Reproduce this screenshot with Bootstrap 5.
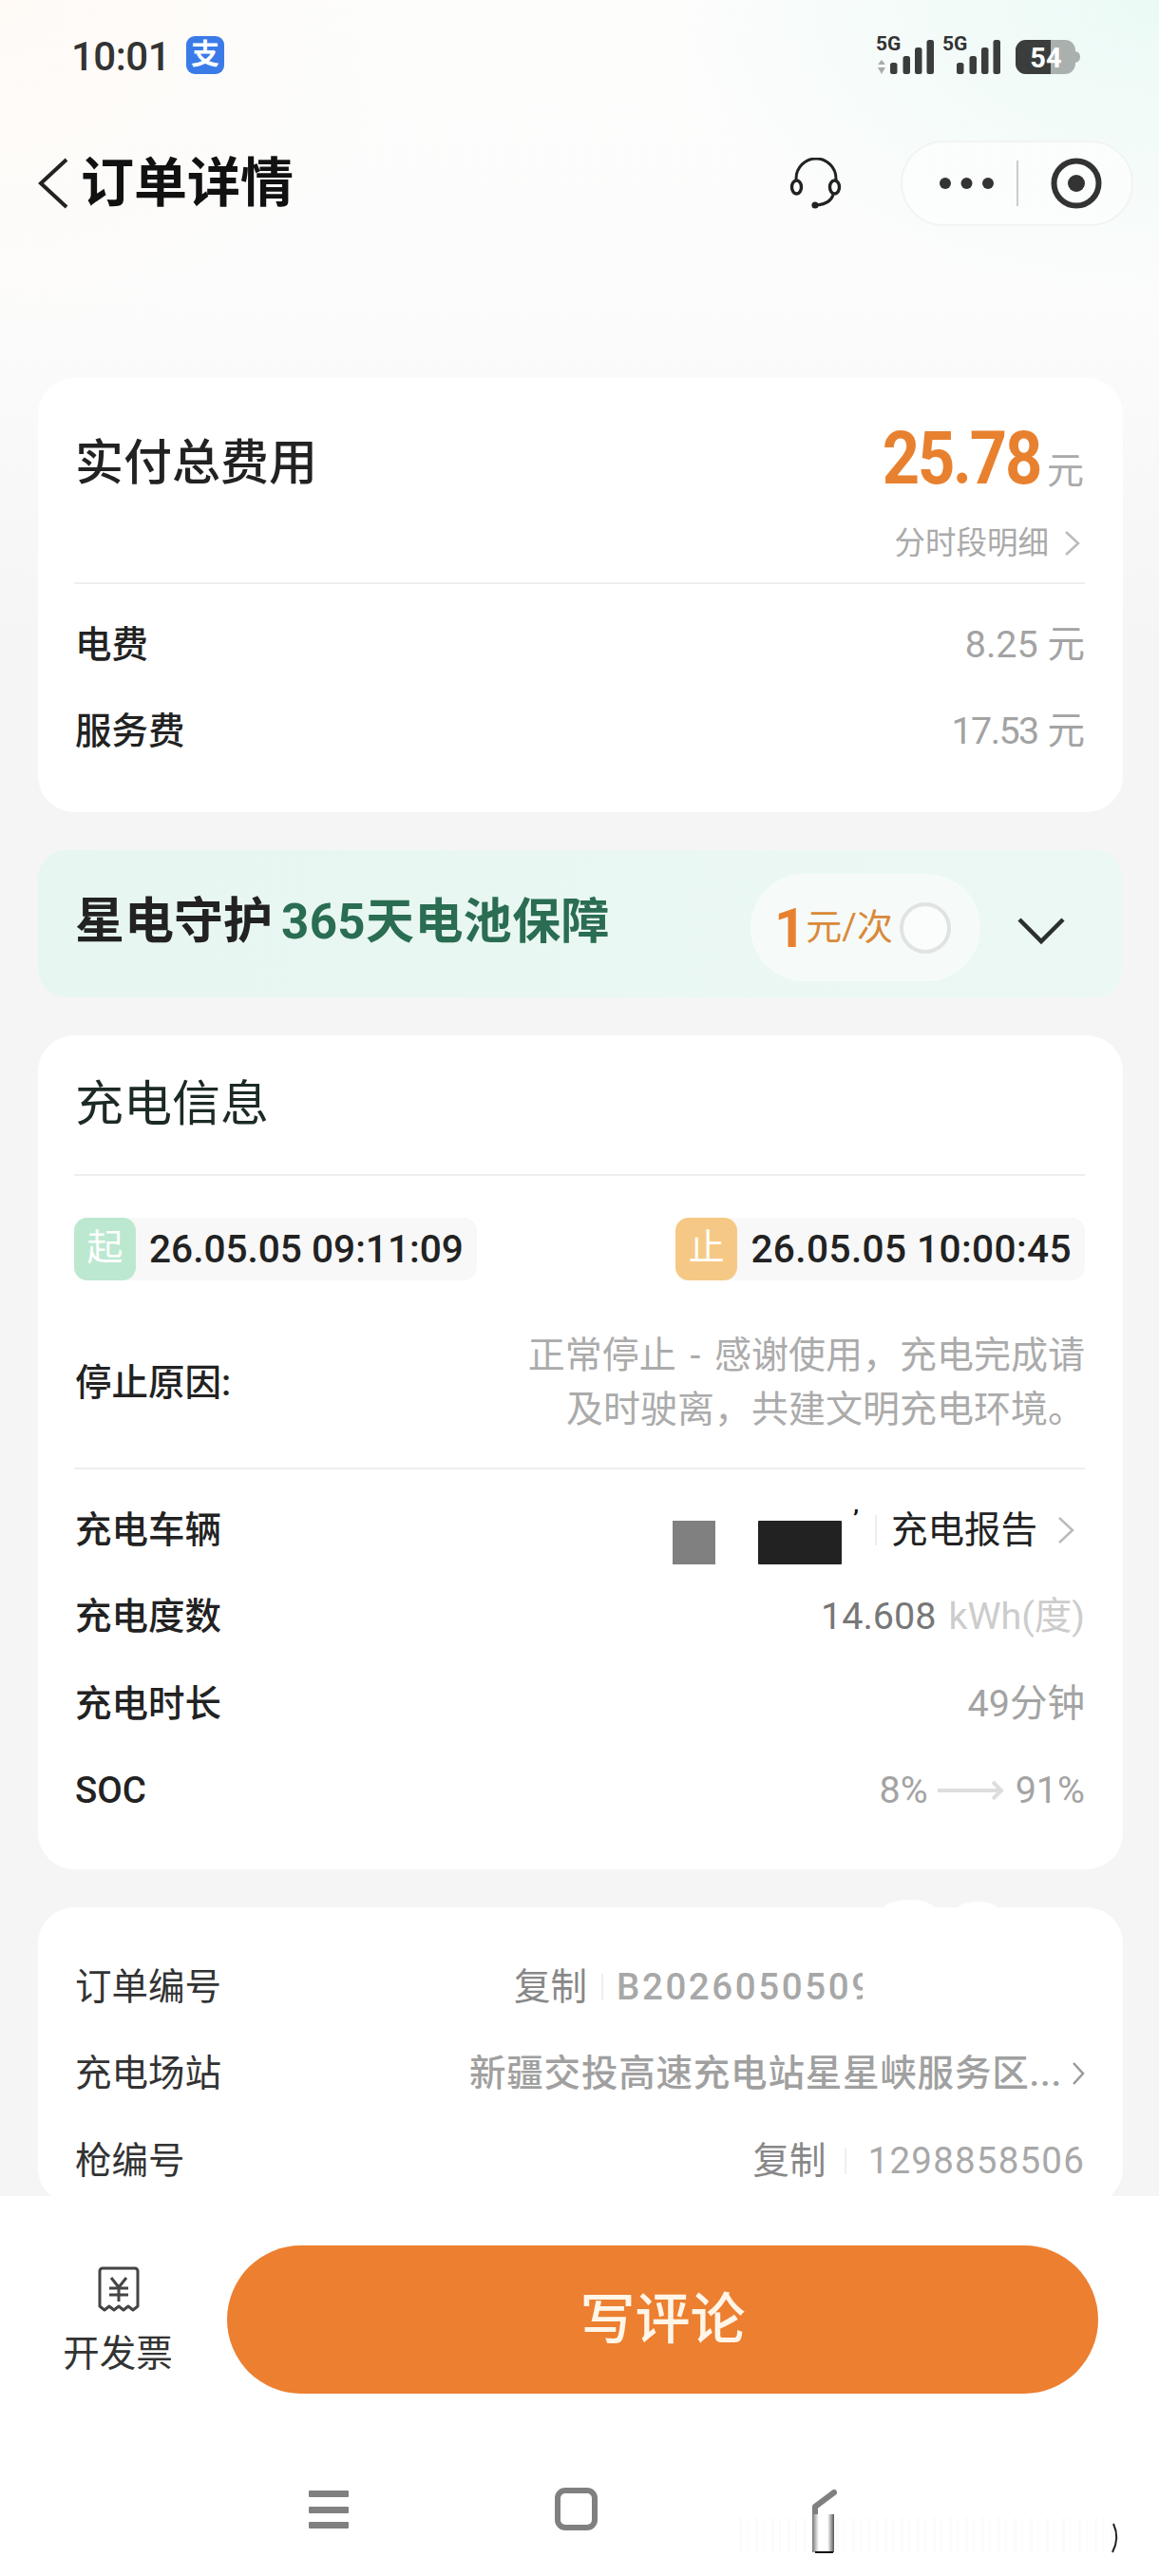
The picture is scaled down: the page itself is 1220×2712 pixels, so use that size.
<!DOCTYPE html>
<html lang="zh">
<head>
  <meta charset="UTF-8">
  <meta name="viewport" content="width=device-width, initial-scale=1.0">
  <title>订单详情</title>
  <link href="https://cdn.jsdelivr.net/npm/bootstrap@5.3.2/dist/css/bootstrap.min.css" rel="stylesheet">
  <style>
    body {
      width: 1220px;
      height: 2712px;
      overflow: hidden;
      font-family: "Roboto", "Noto Sans CJK SC", sans-serif;
      font-size: 38.5px;
      background: #fff;
      color: #222;
    }

    .page-area {
      height: 2312px;
      overflow: hidden;
      background-color: #f5f5f5;
      background-image:
        radial-gradient(ellipse 520px 320px at 100% 0, #ebfaf6 0, rgba(235, 250, 246, 0) 100%),
        radial-gradient(ellipse 420px 380px at 0 0, #fffaf6 0, rgba(255, 250, 246, 0) 100%),
        linear-gradient(180deg, #fdfdfc 0, #fcfcfc 300px, #f5f5f5 680px);
      background-repeat: no-repeat;
    }

    .top-area { height: 398px; }

    .status-row { height: 112px; padding: 38px 82px 0 75px; }
    .clock { font-size: 42px; font-weight: 500; line-height: 44px; color: #333; letter-spacing: -.5px; }
    .ali-icon {
      width: 40px; height: 40px; margin-left: 17px; border-radius: 9px;
      background: #3b7be8; color: #fff; font-size: 30px; font-weight: 700; line-height: 38px; text-align: center;
    }
    .signal-svg { margin-top: -6px; }

    .title-row { height: 90px; margin-top: 36px; padding: 0 27px 0 40px; }
    .page-title { font-size: 56px; font-weight: 700; line-height: 90px; margin: 0 0 0 13px; color: #111; }
    .capsule {
      width: 245px; height: 90px; margin-left: 61px;
      border: 2px solid #f2f4f3; border-radius: 45px; background: rgba(255, 255, 255, .55);
    }

    .sheet { margin: 0 38px 0 40px; border: 0; border-radius: 38px; background: #fff; overflow: visible; }
    .sheet + .sheet { margin-top: 40px; }
    .sheet-in { padding: 0 40px 0 38px; }
    .pad-a { padding-bottom: 39px; }
    .pad-b { padding-bottom: 37px; }
    .sep { height: 2px; background: #eeeeee; }

    .total-block { height: 215px; }
    .total-line { height: 142px; padding-top: 28px; }
    .head-text { font-size: 51px; font-weight: 500; color: #222; line-height: 70px; margin-left: 1px; margin-top: 10px; }
    .money { display: inline-block; font-size: 78px; font-weight: 700; line-height: 84px; color: #e8812f; letter-spacing: -2.5px; transform: scaleX(.88); transform-origin: right center; }
    .unit { font-size: 39px; color: #aaa; margin-left: 7px; margin-right: 1px; }
    .sub-link { font-size: 32.5px; line-height: 46px; color: #aaa; margin-top: 9px; }
    .sub-arrow { margin-left: 16px; }

    .rows { padding-top: 18px; }
    .info-row { height: 91.5px; }
    .row-key { font-weight: 500; color: #222; margin-left: 1px; line-height: 50px; }
    .row-val { color: #a3a3a3; font-size: 39.5px; line-height: 50px; }
    .squeeze { letter-spacing: -1.6px; }

    .guard-box { height: 155px; padding: 25px 60px 0 40px; background: linear-gradient(100deg, #e7f6f1 0, #ecf8f4 100%); border-radius: 30px; }
    .guard-text { font-size: 52px; font-weight: 700; line-height: 72px; margin-top: 15px; margin-left: -1px; }
    .guard-text span { color: #2a6d52; margin-left: 9px; font-size: 51px; letter-spacing: .4px; }
    .price-pill { width: 242px; height: 113px; padding-left: 25px; background: #f6fbf9; color: #d98a3a; font-size: 38px; }
    .price-pill b { font-size: 58px; color: #e8812f; font-weight: 700; line-height: 60px; }
    .ring { width: 54px; height: 54px; margin-left: 7px; border: 4px solid #dfe3e2; border-radius: 50%; background: #fbfdfc; }
    .down-arrow { margin-left: 38px; margin-top: 6px; }

    .charge-head { height: 146px; }
    .charge-title { font-size: 51px; font-weight: 400; color: #1c2a26; line-height: 146px; margin-left: 1px; }
    .time-row { margin-top: 44px; }
    .time-chip { height: 66px; background: #f8f8f8; border-radius: 14px; font-size: 40.6px; font-weight: 500; line-height: 66px; color: #222; padding-right: 14px; }
    .chip-wide { letter-spacing: .4px; }
    .time-tag { width: 65px; height: 66px; margin-right: 14px; border-radius: 14px; color: #fff; font-size: 38px; font-weight: 400; text-align: center; line-height: 62px; }
    .tag-start { background: #bce8d0; }
    .tag-stop { background: #f5c985; }
    .reason-row { margin-top: 51px; margin-bottom: 32px; }
    .reason-text { width: 640px; font-size: 39px; word-spacing: 5px; line-height: 57px; text-align: right; color: #ababab; }

    .blocked { height: 46px; display: inline-block; margin-top: 26px; }
    .blocked-grey { width: 45px; background: #808080; margin-right: 45px; }
    .blocked-dark { width: 88px; background: #222; border-radius: 1px; }
    .tick { font-size: 26px; line-height: 20px; font-weight: 700; margin: -24px 0 0 12px; color: #111; }
    .thin-line { width: 2px; height: 28px; background: #eee; }
    .car-line { margin-left: 17px; height: 32px; }
    .report-link { color: #222; margin-left: 15px; margin-right: 21px; font-size: 38.5px; line-height: 50px; }
    .report-arrow { margin-right: 11px; }

    .energy { color: #777; font-size: 39.5px; }
    .kwh { color: #ccc; margin-left: 13px; }
    .soc-arrow { margin-left: 10px; margin-right: 12px; }

    .bump { position: absolute; background: #fff; border-radius: 50%; }
    .bump-a { width: 54px; height: 20px; top: -8px; left: 890px; }
    .bump-b { width: 42px; height: 16px; top: -6px; left: 968px; }

    .order-rows { padding-top: 38px; }
    .plain-key { font-weight: 400; color: #333; }
    .copy-btn { color: #888; line-height: 50px; }
    .order-line { margin-left: 15px; margin-right: 14px; }
    .gun-line { margin-left: 19px; margin-right: 23px; }
    .order-no { width: 259px; overflow: hidden; white-space: nowrap; color: #a8a8a8; font-weight: 500; letter-spacing: 2.6px; line-height: 50px; margin-right: 234px; }
    .gun-no { color: #a8a8a8; letter-spacing: 1.2px; line-height: 50px; }
    .station { color: #a0a0a0; font-weight: 500; line-height: 50px; letter-spacing: .8px; }
    .station-arrow { margin-left: 10px; }

    .bottom-bar { height: 400px; background: #fff; }
    .action-row { padding: 52px 64px 0 66px; }
    .invoice { width: 116px; margin-right: 57px; color: #333; line-height: 50px; text-align: center; }
    .invoice svg { margin: 22px 0 19px 37px; display: block; }
    .review-btn {
      width: 917px; height: 156px; padding: 0; border: 0; border-radius: 78px;
      background: #ec7f30; color: #fff5e8; font-size: 58px; font-weight: 500; line-height: 150px;
    }
    .review-btn:hover { background: #ec7f30; color: #fff5e8; }

    .nav-row { padding: 99px 0 0 325px; }
    .menu-lines { width: 42px; height: 40px; margin-top: 3px; margin-right: 217px; }
    .menu-lines i { display: block; height: 7px; background: #808080; border-radius: 1px; }
    .home-box { width: 45px; height: 45px; border: 6px solid #808080; border-radius: 11px; margin-right: 146px; }
  </style>
</head>
<body>

  <div class="page-area">
    <div class="top-area">
      <div class="status-row d-flex justify-content-between">
        <div class="d-flex align-items-start">
          <span class="clock">10:01</span>
          <span class="ali-icon">支</span>
        </div>
        <svg class="signal-svg" width="216" height="48" viewBox="0 -6 216 48">
          <text x="0" y="15" font-family="Roboto" font-size="21" font-weight="700" fill="#333">5G</text>
          <polygon points="6,25 2,30 10,30" fill="#aaa"/>
          <polygon points="6,40 2,33 10,33" fill="#aaa"/>
          <rect x="15" y="28" width="7.5" height="12" rx="2.5" fill="#3a3d3c"/>
          <rect x="28.5" y="21" width="7.5" height="19" rx="2.5" fill="#3a3d3c"/>
          <rect x="41" y="12" width="7.5" height="28" rx="2.5" fill="#3a3d3c"/>
          <rect x="53.5" y="4" width="7.5" height="36" rx="2.5" fill="#3a3d3c"/>
          <text x="70" y="15" font-family="Roboto" font-size="21" font-weight="700" fill="#333">5G</text>
          <rect x="85" y="28" width="7.5" height="12" rx="2.5" fill="#3a3d3c"/>
          <rect x="98.5" y="21" width="7.5" height="19" rx="2.5" fill="#3a3d3c"/>
          <rect x="111" y="12" width="7.5" height="28" rx="2.5" fill="#3a3d3c"/>
          <rect x="123.5" y="4" width="7.5" height="36" rx="2.5" fill="#3a3d3c"/>
          <rect x="147" y="4" width="63" height="36" rx="11" fill="#aab0ad"/>
          <path d="M210 16 q5 1 5 6 t-5 6z" fill="#aab0ad"/>
          <path d="M158 4h26v36h-26a11 11 0 0 1-11-11v-14a11 11 0 0 1 11-11z" fill="#3a3d3c"/>
          <text x="179" y="32.5" text-anchor="middle" font-family="Roboto" font-size="29" font-weight="700" fill="#fff">54</text>
        </svg>
      </div>
      <div class="title-row d-flex align-items-center">
        <svg width="32" height="54" viewBox="0 0 32 54" class="flex-shrink-0">
          <polyline points="30,2 3,27 30,52" fill="none" stroke="#222" stroke-width="4"/>
        </svg>
        <h1 class="page-title flex-grow-1">订单详情</h1>
        <svg width="56" height="54" viewBox="0 0 56 54" class="flex-shrink-0">
          <path d="M7 24V22a21 21 0 0 1 42 0v2" fill="none" stroke="#222" stroke-width="3"/>
          <ellipse cx="7.5" cy="31" rx="5" ry="7" fill="none" stroke="#222" stroke-width="3.4"/>
          <ellipse cx="47.5" cy="31" rx="5" ry="7" fill="none" stroke="#222" stroke-width="3.4"/>
          <path d="M46 39c-2 7-8 10-17 11" fill="none" stroke="#222" stroke-width="3"/>
          <circle cx="27" cy="50" r="3.6" fill="#222"/>
        </svg>
        <div class="capsule d-flex align-items-center flex-shrink-0">
          <svg width="241" height="86" viewBox="0 0 241 86">
            <circle cx="45" cy="43" r="6" fill="#333"/>
            <circle cx="67.5" cy="43" r="6" fill="#333"/>
            <circle cx="90" cy="43" r="6" fill="#333"/>
            <line x1="121" y1="19" x2="121" y2="67" stroke="#bbb" stroke-width="1.5"/>
            <circle cx="183" cy="43" r="23.5" fill="none" stroke="#333" stroke-width="6"/>
            <circle cx="183" cy="43" r="9" fill="#333"/>
          </svg>
        </div>
      </div>
    </div>

    <div class="card sheet">
      <div class="sheet-in pad-a">
        <div class="total-block">
          <div class="total-line d-flex justify-content-between align-items-center">
            <span class="head-text">实付总费用</span>
            <span class="d-flex align-items-end">
              <span class="money">25.78</span>
              <span class="unit">元</span>
            </span>
          </div>
          <div class="sub-link d-flex justify-content-end align-items-center">
            分时段明细
            <svg width="18" height="28" viewBox="0 0 18 28" class="sub-arrow me-1"><polyline points="2,2 15,14 2,26" fill="none" stroke="#bbb" stroke-width="2.5"/></svg>
          </div>
        </div>
        <div class="sep"></div>
        <div class="rows">
          <div class="info-row d-flex justify-content-between align-items-center">
            <span class="row-key">电费</span><span class="row-val">8.25 元</span>
          </div>
          <div class="info-row d-flex justify-content-between align-items-center">
            <span class="row-key">服务费</span><span class="row-val"><span class="squeeze">17.53</span> 元</span>
          </div>
        </div>
      </div>
    </div>

    <div class="card sheet guard-box flex-row justify-content-between align-items-start">
      <div class="guard-text">星电守护<span>365天电池保障</span></div>
      <div class="d-flex align-items-center">
        <div class="price-pill rounded-pill d-flex align-items-center">
          <b>1</b>元/次
          <span class="ring"></span>
        </div>
        <svg class="down-arrow" width="52" height="32" viewBox="0 0 52 32"><polyline points="3,4 26,27 49,4" fill="none" stroke="#2b2f2e" stroke-width="4.5"/></svg>
      </div>
    </div>

    <div class="card sheet">
      <div class="sheet-in pad-b">
        <div class="charge-head charge-title">充电信息</div>
        <div class="sep"></div>
        <div class="time-row d-flex justify-content-between">
          <div class="time-chip d-flex"><span class="time-tag tag-start">起</span>26.05.05 09:11:09</div>
          <div class="time-chip chip-wide d-flex"><span class="time-tag tag-stop">止</span>26.05.05 10:00:45</div>
        </div>
        <div class="reason-row d-flex justify-content-between align-items-center">
          <span class="row-key">停止原因:</span>
          <div class="reason-text">正常停止 - 感谢使用，充电完成请<br>及时驶离，共建文明充电环境。</div>
        </div>
        <div class="sep"></div>
        <div class="rows">
          <div class="info-row d-flex justify-content-between align-items-center">
            <span class="row-key">充电车辆</span>
            <span class="d-flex align-items-center">
              <span class="blocked blocked-grey"></span>
              <span class="blocked blocked-dark"></span>
              <span class="tick">’</span>
              <span class="thin-line car-line"></span>
              <span class="report-link">充电报告</span>
              <svg width="18" height="30" viewBox="0 0 18 30" class="report-arrow"><polyline points="2,2 16,15 2,28" fill="none" stroke="#bbb" stroke-width="2.5"/></svg>
            </span>
          </div>
          <div class="info-row d-flex justify-content-between align-items-center">
            <span class="row-key">充电度数</span>
            <span class="row-val"><span class="energy">14.608</span><span class="kwh">kWh(度)</span></span>
          </div>
          <div class="info-row d-flex justify-content-between align-items-center">
            <span class="row-key">充电时长</span><span class="row-val">49分钟</span>
          </div>
          <div class="info-row d-flex justify-content-between align-items-center">
            <span class="row-key">SOC</span>
            <span class="row-val d-flex align-items-center">8%
              <svg width="70" height="24" viewBox="0 0 70 24" class="soc-arrow"><path d="M0 12H66M58 3l9 9-9 9" fill="none" stroke="#ddd" stroke-width="4"/></svg>91%</span>
          </div>
        </div>
      </div>
    </div>

    <div class="card sheet position-relative">
      <span class="bump bump-a"></span>
      <span class="bump bump-b"></span>
      <div class="sheet-in order-rows">
        <div class="info-row d-flex align-items-center">
          <span class="row-key plain-key me-auto">订单编号</span>
          <span class="copy-btn">复制</span>
          <span class="thin-line order-line"></span>
          <span class="order-no">B2026050509</span>
        </div>
        <div class="info-row d-flex justify-content-between align-items-center">
          <span class="row-key plain-key">充电场站</span>
          <span class="d-flex align-items-center">
            <span class="station">新疆交投高速充电站星星峡服务区...</span>
            <svg width="14" height="28" viewBox="0 0 14 28" class="station-arrow"><polyline points="2,3 12,14 2,25" fill="none" stroke="#999" stroke-width="2.5"/></svg>
          </span>
        </div>
        <div class="info-row d-flex align-items-center">
          <span class="row-key plain-key me-auto">枪编号</span>
          <span class="copy-btn">复制</span>
          <span class="thin-line gun-line"></span>
          <span class="gun-no">1298858506</span>
        </div>
      </div>
    </div>
  </div>

  <div class="bottom-bar">
    <div class="action-row d-flex">
      <div class="invoice flex-shrink-0">
        <svg width="44" height="48" viewBox="0 0 44 48">
          <path d="M2 42V5a3 3 0 0 1 3-3h34a3 3 0 0 1 3 3v37l-5 4-5-4-5 4-5-4-5 4-5-4-5 4z" fill="none" stroke="#444" stroke-width="3" stroke-linejoin="round"/>
          <path d="M14 12l8 10 8-10M12 23h20M12 30h20M22 22v15" fill="none" stroke="#444" stroke-width="3"/>
        </svg>
        开发票
      </div>
      <button type="button" class="btn review-btn flex-shrink-0">写评论</button>
    </div>
    <div class="nav-row d-flex align-items-start">
      <div class="menu-lines d-flex flex-column justify-content-between"><i></i><i></i><i></i></div>
      <div class="home-box flex-shrink-0"></div>
      <svg width="420" height="76" viewBox="0 0 420 76" class="flex-shrink-0">
        <defs>
          <linearGradient id="edgeFade" x1="0" x2="1" y1="0" y2="0">
            <stop offset="0" stop-color="#777"/>
            <stop offset=".3" stop-color="#fff"/>
            <stop offset=".7" stop-color="#fff"/>
            <stop offset="1" stop-color="#555"/>
          </linearGradient>
          <pattern id="smudge" width="17" height="40" patternUnits="userSpaceOnUse">
            <rect width="17" height="40" fill="#fff"/>
            <rect x="3" width="3" height="40" fill="#fbfbfb"/>
            <rect x="11" width="2" height="40" fill="#fcfcfc"/>
          </pattern>
        </defs>
        <rect x="0" y="32" width="398" height="37" fill="url(#smudge)"/>
        <polyline points="103,5 83,20 83,30" fill="none" stroke="#808080" stroke-width="6" stroke-linejoin="round" stroke-linecap="round"/>
        <rect x="80" y="28" width="23" height="40" fill="url(#edgeFade)"/>
        <rect x="83" y="67" width="19" height="2" fill="#111"/>
        <path d="M397 38q7 15-1 30" fill="none" stroke="#222" stroke-width="2"/>
      </svg>
    </div>
  </div>

  <script src="https://cdn.jsdelivr.net/npm/bootstrap@5.3.2/dist/js/bootstrap.bundle.min.js"></script>
</body>
</html>
